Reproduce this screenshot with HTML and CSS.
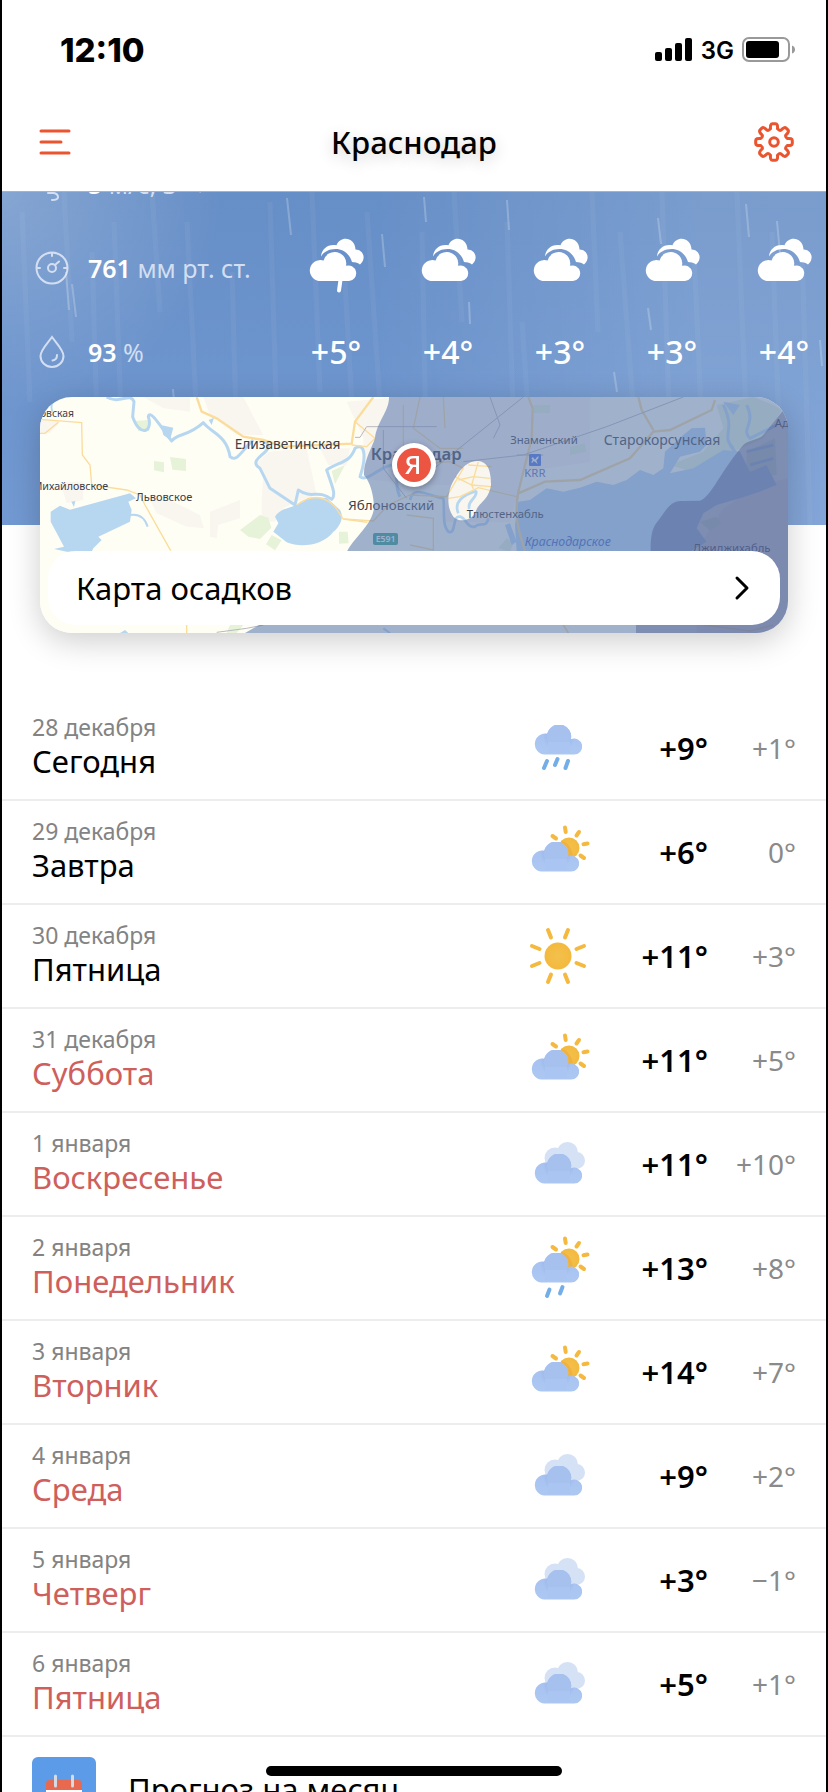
FILE: index.html
```html
<!DOCTYPE html>
<html lang="ru">
<head>
    <meta charset="UTF-8">
    <meta name="viewport" content="width=device-width, initial-scale=1.0">
    <title>Погода в Краснодаре</title>
    <link rel="stylesheet" href="styles.css">
</head>
<body>

    <!-- shared weather icons -->
    <svg class="sprite" aria-hidden="true">
        <defs>
            <linearGradient id="cloudFill" x1="0" y1="0" x2="0" y2="30" gradientUnits="userSpaceOnUse">
                <stop offset="0" stop-color="#a6c0ef"/>
                <stop offset="1" stop-color="#acc8f2"/>
            </linearGradient>
            <radialGradient id="sunFill">
                <stop offset="0" stop-color="#f3c14c"/>
                <stop offset="1" stop-color="#f4b93e"/>
            </radialGradient>
            <radialGradient id="cloudShade" cx="25" cy="11" r="16" gradientUnits="userSpaceOnUse">
                <stop offset="0.72" stop-color="#98b5e8" stop-opacity="0.6"/>
                <stop offset="1" stop-color="#98b5e8" stop-opacity="0"/>
            </radialGradient>
            <linearGradient id="puffFill" x1="0" y1="0" x2="0" y2="25" gradientUnits="userSpaceOnUse">
                <stop offset="0.6" stop-color="#a7c1ef"/>
                <stop offset="1" stop-color="#abc6f1" stop-opacity="0.2"/>
            </linearGradient>
            <path id="cloudShape" d="M10.500 29.500A10.500 10.500 0 1 1 13.200 8.700A12 12 0 0 1 36.900 14.200A8 8 0 1 1 40 29.500Z"/>
        </defs>
        <symbol id="cloud" viewBox="0 0 48 30">
            <use href="#cloudShape" fill="url(#cloudFill)"/>
            <path d="M9 8H41V22H9Z" fill="url(#cloudShade)" clip-path="url(#cloudClip)"/>
            <circle cx="25" cy="12" r="12" fill="url(#puffFill)"/>
            <path d="M14 17H36V28H14Z" fill="#aac5f1"/>
        </symbol>
        <clipPath id="cloudClip"><use href="#cloudShape"/></clipPath>
        <symbol id="sun-behind" viewBox="0 0 64 64">
            <circle cx="43" cy="28" r="10.500" fill="url(#sunFill)"/>
            <path d="M35 22A12.500 12.500 0 0 1 42 37L46 38A14 14 0 0 0 35 21Z" fill="#eca93b" opacity="0.6"/>
            <g stroke="#f4b93e" stroke-width="4" stroke-linecap="round">
                <path d="M39 7.500L39.700 12M53 12L50.500 15.500M61.500 23.500L57.500 24.200M54.500 35.500L58 38M26.500 16L30 18.500"/>
            </g>
        </symbol>
        <symbol id="w-rain" viewBox="0 0 64 64">
            <use href="#cloud" x="8" y="9" width="48" height="30"/>
            <path d="M21 45L18 52M31.500 43L29 49M42 45L39.500 52" stroke="#74aee8" stroke-width="4" stroke-linecap="round"/>
        </symbol>
        <symbol id="w-partly" viewBox="0 0 64 64">
            <use href="#sun-behind" width="64" height="64"/>
            <use href="#cloud" x="5" y="22" width="48" height="30"/>
        </symbol>
        <symbol id="w-partly-rain" viewBox="0 0 64 64" overflow="visible">
            <use href="#sun-behind" y="-5" width="64" height="64"/>
            <use href="#cloud" x="5" y="17" width="48" height="30"/>
            <path d="M23.500 53.500L21 60M36.500 51L34 57.500" stroke="#74aee8" stroke-width="4" stroke-linecap="round"/>
        </symbol>
        <symbol id="w-sun" viewBox="0 0 64 64">
            <circle cx="32" cy="32" r="13.500" fill="url(#sunFill)"/>
            <path d="M22 6L25 13.500M42 6L39 13.500M6 22L13.500 25M6 42L13.500 39M58 22L50.500 25M58 42L50.500 39M22 58L25 50.500M42 58L39 50.500" stroke="#f4b93e" stroke-width="4" stroke-linecap="round"/>
        </symbol>
        <symbol id="w-cloudy" viewBox="0 0 64 64">
            <g fill="#d5e1f5">
                <circle cx="29" cy="26" r="10.500"/>
                <circle cx="41.500" cy="20.500" r="10.500"/>
                <circle cx="50.500" cy="28.500" r="8.500"/>
                <path d="M30 22H44L52 30V37H36Z"/>
            </g>
            <use href="#cloud" x="8" y="22" width="48" height="30"/>
        </symbol>
        <symbol id="h-cloudy" viewBox="-3 0 56 56" overflow="visible">
            <path fill="#fff" d="M10.500 43A10.500 10.500 0 1 1 12.600 22.600A11.500 11.500 0 0 1 35 27.800A7.800 7.800 0 1 1 38 43Z"/>
            <path fill="#fff" d="M10 18.500C10.500 11 17 5.500 25.500 7.200C29-2.500 44-1.500 44.500 11.500C52 11.500 56 20.500 49 26.500C46.500 24.700 43.500 24 41 24C38.500 15.500 32 11 24.500 11C18 11 12.500 14 10 18.500Z"/>
        </symbol>
        <symbol id="h-cloudy-rain" viewBox="0 0 56 56" overflow="visible">
            <use href="#h-cloudy" width="56" height="56"/>
            <path d="M32.500 42L31 52.500" stroke="#fff" stroke-width="4" stroke-linecap="round"/>
        </symbol>
    </svg>

    <div class="app">
        <header class="header">
            <div class="status-bar">
                <span class="time">12:10</span>
                <div class="status-icons">
                    <svg width="38" height="24" viewBox="0 0 38 24">
                        <rect x="0" y="14" width="7" height="9" rx="2"/>
                        <rect x="10" y="10" width="7" height="13" rx="2"/>
                        <rect x="20" y="5" width="7" height="18" rx="2"/>
                        <rect x="30" y="0" width="7" height="23" rx="2"/>
                    </svg>
                    <span class="network">3G</span>
                    <svg width="54" height="26" viewBox="0 0 54 26">
                        <rect x="1" y="1" width="46" height="23" rx="6" fill="none" stroke="#999" stroke-width="2"/>
                        <rect x="4" y="4" width="33" height="17" rx="3"/>
                        <path d="M50 8.500Q53 9.500 53 12.500T50 16.500Z" fill="#999"/>
                    </svg>
                </div>
            </div>
            <div class="nav-bar">
                <button class="icon-button" type="button" aria-label="Меню">
                    <svg width="40" height="40" viewBox="0 0 40 40">
                        <path d="M7 9H35M7 20H27M7 31H35" fill="none" stroke="#ea5530" stroke-width="3" stroke-linecap="round"/>
                    </svg>
                </button>
                <h1>Краснодар</h1>
                <button class="icon-button" type="button" aria-label="Настройки">
                    <svg width="40" height="40" viewBox="-20 -20 40 40">
                        <path d="M-3.500-13.200Q-4-18.300-1.500-18.300H1.500Q4-18.300 3.500-13.200Q5.500-11 6.900-11.800Q10.300-15.600 12.100-13.900L13.900-12.100Q15.600-10.300 11.800-6.900Q11-5.500 13.200-3.500Q18.300-4 18.300-1.500V1.500Q18.300 4 13.200 3.500Q11 5.500 11.800 6.900Q15.600 10.300 13.900 12.100L12.100 13.900Q10.300 15.600 6.900 11.800Q5.500 11 3.500 13.200Q4 18.300 1.500 18.300H-1.500Q-4 18.300-3.500 13.200Q-5.500 11-6.900 11.800Q-10.300 15.600-12.100 13.900L-13.900 12.100Q-15.600 10.300-11.800 6.900Q-11 5.500-13.200 3.500Q-18.300 4-18.300 1.500V-1.500Q-18.300-4-13.200-3.500Q-11-5.500-11.800-6.900Q-15.600-10.300-13.900-12.100L-12.100-13.900Q-10.300-15.600-6.900-11.800Q-5.500-11-3.500-13.200Z" fill="none" stroke="#ea5530" stroke-width="3" stroke-linejoin="round"/>
                        <circle r="4.300" fill="none" stroke="#ea5530" stroke-width="3"/>
                    </svg>
                </button>
            </div>
        </header>

        <section class="hero">
            <svg class="rain" viewBox="0 0 824 333" preserveAspectRatio="none" aria-hidden="true">
                <g stroke="#fff" stroke-width="5" opacity="0.04">
                    <path d="M20 20L28 210M62 0L70 150M90 60L98 333M112 30L120 250M150 0L158 120M185 30L200 333M230 80L236 300M268 10L278 333M310 0L318 200M343 90L356 320M365 20L384 300M420 40L425 300M452 0L460 130M505 30L512 250M520 130L534 333M590 0L596 140M618 40L640 333M660 0L667 220M692 60L700 240M735 0L748 320M770 40L778 260M800 60L808 333"/>
                </g>
                <g stroke="#fff" stroke-width="2" opacity="0.22">
                    <path d="M285 6L289 43M64 80L67 118M70 92L74 125M380 42L383 75M422 5L424 30M505 8L507 38M656 26L659 52M744 12L747 45M775 29L778 62M646 116L649 138M467 110L468 132M818 148L820 174M171 197L173 222M612 180L615 200"/>
                </g>
            </svg>
            <ul class="metrics">
                <li>
                    <svg width="36" height="36" viewBox="0 0 36 36"><path d="M3 13H22A5 5 0 1 0 17 8M3 21H28M14 27H20Q24 28 24 31T18 34" fill="none" stroke="#d3dff1" stroke-width="2" stroke-linecap="round"/></svg>
                    <span><b>5</b> м/с, З →</span>
                </li>
                <li>
                    <svg width="36" height="36" viewBox="0 0 36 36" fill="none" stroke="#d3dff1" stroke-width="2" stroke-linecap="round">
                        <circle cx="18" cy="18" r="15.500"/>
                        <circle cx="18" cy="18" r="4"/>
                        <path d="M21 15L25 11.500M18 3V6M3 18H6M30 18H33"/>
                    </svg>
                    <span><b>761</b> мм рт. ст.</span>
                </li>
                <li>
                    <svg width="36" height="36" viewBox="0 0 36 36" fill="none" stroke="#d3dff1" stroke-width="2" stroke-linecap="round">
                        <path d="M18 3C13 10 6.500 16 6.500 22A11.500 11 0 0 0 29.500 22C29.500 16 23 10 18 3Z"/>
                        <path d="M23 21Q23 26 18.500 26.500"/>
                    </svg>
                    <span><b>93</b> %</span>
                </li>
            </ul>
            <ul class="hourly">
                <li><svg><use href="#h-cloudy-rain"/></svg><span>+5°</span></li>
                <li><svg><use href="#h-cloudy"/></svg><span>+4°</span></li>
                <li><svg><use href="#h-cloudy"/></svg><span>+3°</span></li>
                <li><svg><use href="#h-cloudy"/></svg><span>+3°</span></li>
                <li><svg><use href="#h-cloudy"/></svg><span>+4°</span></li>
            </ul>
        </section>

        <a class="map-card" href="#map">
            <svg class="map" viewBox="30 36 2244 708" preserveAspectRatio="xMidYMid slice" aria-hidden="true">
                <rect x="30" y="36" width="2244" height="708" fill="#fffef5"/>
                <!-- built-up areas -->
                <g fill="#f9f6f0">
                    <path d="M340 36H480V80L400 70ZM520 36H640L700 150H620L540 90ZM715 200L830 190L860 330L800 350L760 370L735 410H695V340L700 270L675 240ZM870 190H960L950 240L895 240ZM355 335L430 350L510 390L522 430L470 425L380 385ZM540 380L630 345V400L565 420L560 460L540 455ZM90 290H160V345L110 355Z"/>
                    <path d="M950 50L1100 36H1680V230L1480 260L1440 410H1240L1260 300L1150 300L1000 280V160Z"/>
                    <path d="M30 100L90 110L60 145H30Z"/>
                    <path d="M2010 480L2080 370L2190 300L2274 280V744H2000ZM1930 445L1972 465L1955 515L1922 480Z" fill="#faf3ee"/>
                </g>
                <!-- parks -->
                <g fill="#e7f3d9">
                    <path d="M372 228L402 232V262L372 256ZM420 216L468 222V258L427 254ZM312 108L355 105L358 138L325 138ZM630 435L690 390L715 398L724 428L690 462L655 455ZM725 450L755 466L735 496L708 478ZM927 440H953L956 475L927 476ZM905 258L945 240L915 298ZM600 720H640L620 744H590Z"/>
                    <path d="M1510 60H1560V84H1510ZM1620 185L1665 175L1668 200L1620 210ZM1405 490L1430 460L1450 475L1440 500ZM2060 60L2170 36L2230 60L2255 75L2200 160L2110 200L2080 240L1990 262L1920 240L2020 200L2080 130ZM2150 200L2235 160L2240 270L2150 275ZM2010 410L2060 395L2075 415L2040 438Z"/>
                </g>
                <!-- rivers -->
                <g fill="none" stroke="#b7d7f1" stroke-width="9" stroke-linejoin="round">
                    <path d="M230 36C270 60 300 20 312 50L308 95C330 160 370 140 355 95C360 70 395 130 425 168C440 145 475 155 520 113C545 145 590 150 600 215C620 235 640 190 670 165M695 165C760 195 640 220 690 250L720 310L795 360L805 315C850 345 860 310 905 343C920 330 905 300 890 255C925 230 960 235 975 190C1005 170 1010 215 990 275C1010 295 1060 235 1090 240C1110 260 1090 300 1110 335"/>
                    <path d="M1140 345C1150 300 1190 330 1240 340C1245 370 1235 420 1255 440C1280 450 1265 390 1290 395C1310 400 1310 430 1335 425C1350 410 1370 430 1375 400M1285 385C1270 350 1300 330 1340 318M1338 318C1345 340 1310 345 1318 372" stroke-width="8"/>
                    <path d="M70 36Q60 70 68 80M300 390C330 385 345 400 353 425M1080 744L1060 730" stroke-width="6"/>
                    <path d="M2080 60C2120 140 2070 150 2110 190M2150 60C2180 120 2130 130 2160 160L2240 120M2150 200L2230 180M2160 240L2230 220M2100 180L2130 220"/>
                </g>
                <!-- lakes and the reservoir -->
                <g fill="#b7d7f1">
                    <path d="M62 380L90 362L120 374L300 325L318 340L295 350L305 375L300 410L205 455L215 465L190 490L185 500H110L72 492L102 485L62 410Z"/>
                    <path d="M735 395C760 360 790 375 835 338L890 338L930 375C945 400 925 430 910 440C880 480 815 490 770 472L730 440L745 415Z"/>
                    <path d="M392 120L430 128L420 165L400 150ZM536 105L552 98L545 120ZM124 350L136 348L132 366ZM270 744L285 735L295 744Z"/>
                    <path d="M1465 350L1500 345L1550 310L1600 320L1650 308L1700 290L1750 300L1790 285L1830 255L1870 270L1900 250L1905 200L1960 150L1985 130L2025 128L2030 180L2010 200L1950 215L1920 265L1990 250L2080 195L2130 200L2160 260L2210 240L2240 300L2190 320L2130 340L2060 360L2020 385L2000 430L2030 470L1980 500H1460L1455 420Z"/>
                    <path d="M1425 420L1440 415L1460 470L1445 480ZM2080 50L2130 60L2110 90Z"/>
                </g>
                <!-- roads -->
                <g fill="none" stroke="#fbdc9b" stroke-width="4">
                    <path d="M30 103L155 113L157 210L180 240L185 300L290 315L330 330L345 360L422 497M30 145H45L85 112M470 720V744M940 402L1012 412M975 110L1035 160L1010 185L965 180"/>
                    <path d="M500 36L515 80L560 100L640 155L700 165L760 185L965 176L975 110L1030 36" stroke-width="7"/>
                    <path d="M800 360C840 330 880 330 915 365L940 402L1030 408L1075 360L1140 330L1250 335L1300 250L1260 230L1150 240L1120 200V60M1170 36L1150 130L1230 190L1300 190M1240 36L1245 130M1140 480L1210 495V400L1130 390"/>
                    <path d="M1255 340L1290 335L1345 308L1460 335M1275 275L1325 300L1385 305M1315 240L1385 245M1345 230L1325 300L1330 312M1285 285L1330 275L1380 280"/>
                    <path d="M1495 36L1508 70L1505 160L1465 320C1450 400 1470 450 1485 497M1465 325L1545 290L1650 285L1800 220L1870 140L1920 135L2045 75L2055 45M1825 36L1835 75L1870 135" stroke-width="7"/>
                    <path d="M1600 720L1615 744M2020 720L2160 738L2230 720" stroke-width="5"/>
                </g>
                <g fill="none" stroke="#b9b9bd" stroke-width="3">
                    <path d="M975 157H990L1010 125H1220M1060 135V250L1130 340M1150 300L1480 36M1300 230L1480 210L1730 125L1960 36M1380 36L1410 120L1390 160M1540 210L1460 210M560 742L650 730L700 720"/>
                </g>
                <g class="map-labels">
                    <text x="14" y="96" font-size="31">ковская</text>
                    <text x="614" y="191" font-size="41">Елизаветинская</text>
                    <text x="8" y="314" font-size="32">Михайловское</text>
                    <text x="318" y="347" font-size="33">Львовское</text>
                    <text x="955" y="374" font-size="40">Яблоновский</text>
                    <text x="1022" y="224" font-size="50" font-weight="600">Краснодар</text>
                    <text x="1441" y="177" font-size="34">Знаменский</text>
                    <text x="1721" y="180" font-size="42">Старокорсунская</text>
                    <text x="1310" y="398" font-size="34">Тлюстенхабль</text>
                    <text x="1988" y="500" font-size="34">Джиджихабль</text>
                    <text x="2234" y="126" font-size="34">Адыгейск</text>
                    <text x="1483" y="275" font-size="34" fill="#6170b6">KRR</text>
                    <text x="1484" y="482" font-size="37" font-style="italic" fill="#3d64c4">Краснодарское</text>
                </g>
                <rect x="1029" y="444" width="75" height="36" rx="6" fill="#35a08a"/>
                <text x="1037" y="472" font-size="26" font-weight="600" fill="#fff">E591</text>
                <rect x="1497" y="207" width="36" height="36" rx="4" fill="#4b76e0"/>
                <path d="M1504 219L1509 217L1515 224L1521 216L1526 214L1525 220L1519 226L1523 238L1517 232L1511 228L1506 235L1504 231L1508 225Z" fill="#fff"/>
                <!-- precipitation zones -->
                <path fill="#607db1" fill-opacity="0.6" fill-rule="evenodd" d="M1077 36C1078 80 1040 110 1035 160C1025 190 1000 230 1002 270C1020 290 1032 330 1032 370C1025 420 980 450 952 497L900 600L645 744H2274V36ZM1340 228C1370 228 1383 250 1383 300C1375 350 1345 350 1335 385C1320 410 1285 412 1270 395C1245 360 1255 310 1275 280C1295 245 1315 230 1340 228Z"/>
                <path fill="#4a588b" fill-opacity="0.4" d="M2258 78L2274 90V744H1818V560L1862 497C1862 430 1875 420 1890 400C1920 355 1930 348 1960 348L2010 347C2045 335 2070 260 2140 180C2155 165 2185 165 2200 150Z"/>
            </svg>
            <svg class="pin" width="50" height="50" viewBox="0 0 50 50" aria-hidden="true">
                <circle cx="25" cy="25" r="22" fill="#fff"/>
                <circle cx="25" cy="25" r="17" fill="#ec5542"/>
                <text x="24" y="34" text-anchor="middle" font-size="26" font-weight="500" fill="#fff">Я</text>
            </svg>
            <span class="map-caption">
                Карта осадков
                <svg width="16" height="26" viewBox="0 0 16 26"><path d="M3 3L13 13L3 23" fill="none" stroke="#000" stroke-width="3" stroke-linecap="round" stroke-linejoin="round"/></svg>
            </span>
        </a>

        <table class="forecast">
            <tbody>
                <tr>
                    <th scope="row"><small>28 декабря</small>Сегодня</th>
                    <td class="icon"><svg><use href="#w-rain"/></svg></td>
                    <td class="high">+9°</td>
                    <td class="low">+1°</td>
                </tr>
                <tr>
                    <th scope="row"><small>29 декабря</small>Завтра</th>
                    <td class="icon"><svg><use href="#w-partly"/></svg></td>
                    <td class="high">+6°</td>
                    <td class="low">0°</td>
                </tr>
                <tr>
                    <th scope="row"><small>30 декабря</small>Пятница</th>
                    <td class="icon"><svg><use href="#w-sun"/></svg></td>
                    <td class="high">+11°</td>
                    <td class="low">+3°</td>
                </tr>
                <tr class="holiday">
                    <th scope="row"><small>31 декабря</small>Суббота</th>
                    <td class="icon"><svg><use href="#w-partly"/></svg></td>
                    <td class="high">+11°</td>
                    <td class="low">+5°</td>
                </tr>
                <tr class="holiday">
                    <th scope="row"><small>1 января</small>Воскресенье</th>
                    <td class="icon"><svg><use href="#w-cloudy"/></svg></td>
                    <td class="high">+11°</td>
                    <td class="low">+10°</td>
                </tr>
                <tr class="holiday">
                    <th scope="row"><small>2 января</small>Понедельник</th>
                    <td class="icon"><svg><use href="#w-partly-rain"/></svg></td>
                    <td class="high">+13°</td>
                    <td class="low">+8°</td>
                </tr>
                <tr class="holiday">
                    <th scope="row"><small>3 января</small>Вторник</th>
                    <td class="icon"><svg><use href="#w-partly"/></svg></td>
                    <td class="high">+14°</td>
                    <td class="low">+7°</td>
                </tr>
                <tr class="holiday">
                    <th scope="row"><small>4 января</small>Среда</th>
                    <td class="icon"><svg><use href="#w-cloudy"/></svg></td>
                    <td class="high">+9°</td>
                    <td class="low">+2°</td>
                </tr>
                <tr class="holiday">
                    <th scope="row"><small>5 января</small>Четверг</th>
                    <td class="icon"><svg><use href="#w-cloudy"/></svg></td>
                    <td class="high">+3°</td>
                    <td class="low">−1°</td>
                </tr>
                <tr class="holiday">
                    <th scope="row"><small>6 января</small>Пятница</th>
                    <td class="icon"><svg><use href="#w-cloudy"/></svg></td>
                    <td class="high">+5°</td>
                    <td class="low">+1°</td>
                </tr>
            </tbody>
        </table>

        <a class="month-link" href="#month">
            <svg width="64" height="64" viewBox="0 0 64 64">
                <rect width="64" height="64" rx="6" fill="#5b9be8"/>
                <path d="M14 28H50V52H14Z" fill="#fff"/>
                <path d="M14 33V27Q14 23 18 23H46Q50 23 50 27V33Z" fill="#e76a50"/>
                <path d="M23.500 19V29M40.500 19V29" stroke="#d5dae3" stroke-width="3" stroke-linecap="round"/>
            </svg>
            Прогноз на месяц
        </a>

        <div class="home-indicator"></div>
    </div>

</body>
</html>
```

FILE: styles.css
```css
* {
    box-sizing: border-box;
}

body {
    margin: 0;
    font-family: "Noto Sans", "Open Sans", sans-serif;
    font-size: 31px;
    color: #000;
    background-color: #fff;
}

ul {
    list-style: none;
    margin: 0;
    padding: 0;
}

a {
    color: inherit;
    text-decoration: none;
}

svg {
    display: block;
    flex-shrink: 0;
}

.sprite {
    position: absolute;
    width: 0;
    height: 0;
}

.app {
    position: relative;
    height: 100vh;
    overflow: hidden;
    border-left: 2px solid #000;
    border-right: 2px solid #000;
}

/* Header */

.header {
    position: relative;
    z-index: 1;
    background-color: #fff;
    border-bottom: 1px solid #b0b1b0;
}

.status-bar {
    display: flex;
    align-items: center;
    justify-content: space-between;
    height: 100px;
    padding: 0 30px 0 58px;
    font-family: Inter, sans-serif;
}

.time {
    font-size: 33px;
    font-weight: 800;
}

.status-icons {
    display: flex;
    align-items: center;
    gap: 8px;
}

.network {
    font-size: 24px;
    font-weight: 600;
}

.nav-bar {
    display: flex;
    align-items: center;
    justify-content: space-between;
    height: 91px;
    padding: 0 32px 8px;
}

.nav-bar h1 {
    margin: 0;
    font-size: 31px;
    font-weight: 500;
    text-shadow: 0 4px 16px rgba(0, 0, 0, 0.2);
}

.icon-button {
    padding: 0;
    border: none;
    background: none;
    cursor: pointer;
}

/* Current weather */

.hero {
    position: relative;
    display: flex;
    overflow: hidden;
    padding-bottom: 131px;
    color: #fff;
    background:
        radial-gradient(circle at 0 0, rgba(255, 255, 255, 0.2), transparent 220px),
        linear-gradient(90deg, transparent 45%, rgba(255, 255, 255, 0.12) 85%),
        linear-gradient(#678fc7, #7299d2);
}

.rain {
    position: absolute;
    inset: 0;
    width: 100%;
    height: 100%;
}

.metrics {
    flex: 0 0 278px;
    margin-top: -50px;
    padding-left: 32px;
    font-size: 25px;
    color: #d3dff1;
}

.metrics li {
    display: flex;
    align-items: center;
    gap: 18px;
    height: 84px;
    white-space: nowrap;
}

.metrics b {
    font-weight: 600;
    color: #fff;
}

.hourly {
    display: flex;
    padding-top: 46px;
    font-size: 32px;
    font-weight: 500;
}

.hourly li {
    display: flex;
    flex-direction: column;
    align-items: center;
    flex: 0 0 112px;
    gap: 36px;
    line-height: 44px;
}

.hourly svg {
    width: 56px;
    height: 56px;
}

/* Precipitation map */

.map-card {
    position: relative;
    display: flex;
    align-items: flex-end;
    height: 236px;
    margin: -128px 38px 64px;
    padding: 8px;
    overflow: hidden;
    border-radius: 32px;
    box-shadow: 0 8px 32px rgba(0, 0, 0, 0.2);
}

.map {
    position: absolute;
    inset: 0;
    width: 100%;
    height: 100%;
}

.map-labels {
    fill: #3c4048;
}

.pin {
    position: absolute;
    top: 43px;
    left: 50%;
    margin-left: -25px;
    filter: drop-shadow(0 2px 3px rgba(0, 0, 0, 0.3));
}

.map-caption {
    position: relative;
    display: flex;
    align-items: center;
    justify-content: space-between;
    width: 100%;
    height: 74px;
    padding: 0 30px 0 28px;
    border-radius: 28px;
    background-color: #fff;
}

/* Daily forecast */

.forecast {
    width: 100%;
    border-collapse: separate;
    border-spacing: 0;
}

.forecast th,
.forecast td {
    height: 104px;
    padding: 0;
    border-bottom: 2px solid #ededed;
}

.forecast th {
    padding: 0 0 6px 30px;
    font-weight: 400;
    line-height: 36px;
    text-align: left;
}

.forecast small {
    display: block;
    font-size: 23px;
    line-height: 32px;
    color: #838383;
}

.forecast .icon {
    width: 64px;
}

.forecast svg {
    width: 64px;
    height: 64px;
}

.forecast .high {
    width: 118px;
    font-weight: 600;
    text-align: right;
}

.forecast .low {
    width: 118px;
    padding-right: 30px;
    font-size: 28px;
    color: #8a8a8a;
    text-align: right;
}

.holiday th {
    color: #ce5f5c;
}

.month-link {
    display: flex;
    align-items: center;
    gap: 32px;
    height: 104px;
    padding: 0 30px;
}

.home-indicator {
    position: absolute;
    bottom: 16px;
    left: 50%;
    width: 296px;
    height: 10px;
    margin-left: -148px;
    border-radius: 5px;
    background-color: #000;
}
```
